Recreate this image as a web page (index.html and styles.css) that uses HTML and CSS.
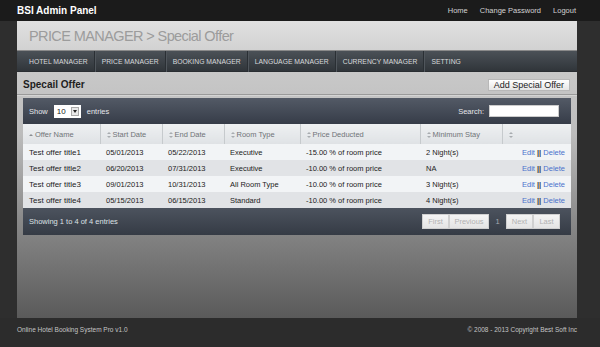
FILE: index.html
```html
<!DOCTYPE html>
<html lang="en">
<head>
<meta charset="utf-8">
<title>BSI Admin Panel</title>
<link rel="stylesheet" href="styles.css">
</head>
<body>
<div class="topbar">
	<span class="brand">BSI Admin Panel</span>
	<ul class="toplinks">
		<li>Home</li>
		<li>Change Password</li>
		<li>Logout</li>
	</ul>
</div>

<div class="page">
	<div class="pagetitle">PRICE MANAGER &gt; Special Offer</div>
	<ul class="nav">
		<li>HOTEL MANAGER</li>
		<li>PRICE MANAGER</li>
		<li>BOOKING MANAGER</li>
		<li>LANGUAGE MANAGER</li>
		<li>CURRENCY MANAGER</li>
		<li class="last">SETTING</li>
	</ul>

	<div class="content">
		<div class="heading">
			<h2>Specail Offer</h2>
			<span class="btn">Add Special Offer</span>
		</div>

		<div class="grid">
			<div class="gridTop">
				<div class="length">Show <span class="select">10<i></i></span> entries</div>
				<div class="search">Search: <span class="field"></span></div>
			</div>

			<table class="list">
				<thead>
					<tr>
						<th class="c1"><span class="sort up"></span>Offer Name</th>
						<th class="c2"><span class="sort"></span>Start Date</th>
						<th class="c3"><span class="sort"></span>End Date</th>
						<th class="c4"><span class="sort"></span>Room Type</th>
						<th class="c5"><span class="sort"></span>Price Deducted</th>
						<th class="c6"><span class="sort"></span>Minimum Stay</th>
						<th class="c7"><span class="sort"></span></th>
					</tr>
				</thead>
				<tbody>
					<tr class="odd">
						<td>Test offer title1</td><td>05/01/2013</td><td>05/22/2013</td><td>Executive</td>
						<td>-15.00 % of room price</td><td>2 Night(s)</td>
						<td class="act"><a>Edit</a> <b>||</b> <a>Delete</a></td>
					</tr>
					<tr class="even">
						<td>Test offer title2</td><td>06/20/2013</td><td>07/31/2013</td><td>Executive</td>
						<td>-10.00 % of room price</td><td>NA</td>
						<td class="act"><a>Edit</a> <b>||</b> <a>Delete</a></td>
					</tr>
					<tr class="odd">
						<td>Test offer title3</td><td>09/01/2013</td><td>10/31/2013</td><td>All Room Type</td>
						<td>-10.00 % of room price</td><td>3 Night(s)</td>
						<td class="act"><a>Edit</a> <b>||</b> <a>Delete</a></td>
					</tr>
					<tr class="even">
						<td>Test offer title4</td><td>05/15/2013</td><td>06/15/2013</td><td>Standard</td>
						<td>-10.00 % of room price</td><td>4 Night(s)</td>
						<td class="act"><a>Edit</a> <b>||</b> <a>Delete</a></td>
					</tr>
				</tbody>
			</table>

			<div class="gridBottom">
				<div class="info">Showing 1 to 4 of 4 entries</div>
				<div class="pager">
					<span class="pbtn w1">First</span><span class="pbtn w2">Previous</span><span class="cur">1</span><span class="pbtn w1">Next</span><span class="pbtn w1">Last</span>
				</div>
			</div>
		</div>
	</div>
</div>

<div class="footer">
	<span>Online Hotel Booking System Pro v1.0</span>
	<span>&copy; 2008 - 2013 Copyright Best Soft Inc</span>
</div>
</body>
</html>
```

FILE: styles.css
```css
*{
	padding:0;
	margin:0;
	list-style: none;
	box-sizing: border-box;
}
html, body {
	height: 100%;
}
body {
	background-color: #2e2e2e;
	font-family: "Liberation Sans", Arial, sans-serif;
	display: flex;
	flex-direction: column;
	overflow: hidden;
}

/* top bar */
.topbar {
	height: 21px;
	background-color: #1b1b1b;
	display: flex;
	align-items: center;
	justify-content: space-between;
	padding: 0 24px 0 17px;
	flex-shrink: 0;
}
.brand {
	color: #fff;
	font-weight: bold;
	font-size: 10px;
}
.toplinks {
	display: flex;
	gap: 12px;
}
.toplinks li {
	color: #d2d2d2;
	font-size: 7.5px;
}

/* main panel */
.page {
	flex: 1;
	margin: 0 23px 0 17px;
	display: flex;
	flex-direction: column;
}
.pagetitle {
	height: 30px;
	line-height: 30px;
	padding-left: 12px;
	font-size: 14.5px;
	letter-spacing: -0.6px;
	color: #9c9c9c;
	background: linear-gradient(#e0e0e0, #d2d2d2);
	border-bottom: 1px solid #8a8a8a;
}
.nav {
	height: 21px;
	display: flex;
	align-items: center;
	padding-left: 5px;
	background: linear-gradient(#4b5157, #30353a);
	border-bottom: 1px solid #2a2e32;
}
.nav li {
	font-size: 6.8px;
	color: #d8dadc;
	padding: 0 6px 0 7px;
	line-height: 21px;
	border-right: 1px solid #2a2f34;
	box-shadow: 1px 0 0 #50565c;
}
.nav li.last {
	border-right: none;
	box-shadow: none;
}

.content {
	flex: 1;
	padding: 0 6px;
	background: linear-gradient(#c8c8c8 0, #bcbcbc 25%, #8a8a8a 60%, #5a5a5a 100%);
}
.heading {
	height: 23px;
	display: flex;
	align-items: center;
	justify-content: space-between;
	border-bottom: 1px solid #9a9a9a;
	box-shadow: 0 1px 0 #d4d4d4;
	margin: 0 -6px;
	padding: 0 6px;
}
.heading h2 {
	font-size: 10px;
	color: #1e1e1e;
	font-weight: bold;
	padding-top: 2px;
}
.btn {
	font-size: 9px;
	color: #222;
	background: linear-gradient(#ffffff, #e6e6e6);
	border: 1px solid #b8b8b8;
	height: 12px;
	line-height: 11px;
	padding: 0 5px;
	margin-right: 1px;
	margin-top: 4px;
}

/* data grid */
.grid {
	margin-top: 3px;
}
.gridTop {
	height: 26px;
	display: flex;
	align-items: center;
	justify-content: space-between;
	padding: 0 12px 0 6px;
	background: linear-gradient(#535a66, #363c48);
	color: #e4e6ea;
	font-size: 7.5px;
}
.length {
	display: flex;
	align-items: center;
}
.select {
	display: inline-flex;
	align-items: center;
	justify-content: space-between;
	width: 27px;
	height: 13px;
	margin: 0 6px 0 6px;
	padding-left: 3px;
	background-color: #fff;
	color: #222;
	font-size: 8px;
}
.select i {
	width: 8px;
	height: 9px;
	margin-right: 2px;
	background-color: #e8e8e8;
	border: 1px solid #aaa;
	position: relative;
}
.select i:after {
	content: "";
	position: absolute;
	left: 1px;
	top: 2px;
	border: 2px solid transparent;
	border-top: 3px solid #222;
}
.search {
	display: flex;
	align-items: center;
}
.field {
	display: inline-block;
	width: 70px;
	height: 12px;
	background-color: #fff;
	margin-left: 5px;
	border: 1px solid #ccc;
}

.list {
	width: 100%;
	border-collapse: collapse;
	font-size: 7.5px;
	color: #222;
}
.list th {
	height: 20px;
	text-align: left;
	font-weight: normal;
	color: #707478;
	padding-left: 6px;
	background: linear-gradient(#eef0f2, #dfe2e5);
	border-right: 1px solid #c6cacd;
}
.list th:last-child {
	border-right: none;
}
.c1 { width: 77px; }
.c2 { width: 62px; }
.c3 { width: 62px; }
.c4 { width: 76px; }
.c5 { width: 120px; }
.c6 { width: 82px; }
.sort {
	display: inline-block;
	width: 4px;
	height: 6px;
	margin-right: 2px;
	vertical-align: -1px;
	position: relative;
}
.sort:before, .sort:after {
	content: "";
	position: absolute;
	left: 0;
	border: 2px solid transparent;
}
.sort:before {
	top: -2px;
	border-bottom: 2px solid #a8acb0;
}
.sort:after {
	top: 4px;
	border-top: 2px solid #a8acb0;
}
.sort.up:after {
	display: none;
}
.sort.up:before {
	top: 0;
	border-bottom-color: #8a8e92;
}
.list td {
	height: 16px;
	padding-left: 6px;
}
.list td:first-child {
	font-size: 8px;
}
.list tr.odd td {
	background-color: #f2f4f6;
}
.list tr.even td {
	background-color: #e1e3e6;
}
.list td.act {
	text-align: right;
	padding-right: 6px;
}
.act a {
	color: #4a72cc;
}
.act b {
	color: #333;
}

.gridBottom {
	height: 27px;
	display: flex;
	align-items: center;
	justify-content: space-between;
	padding: 0 11px 0 6px;
	background: linear-gradient(#4c535e, #353b45);
	color: #dde0e4;
	font-size: 7.5px;
}
.pager {
	display: flex;
	align-items: center;
	font-size: 7.5px;
}
.pbtn {
	height: 15px;
	line-height: 13px;
	text-align: center;
	background: linear-gradient(#f4f4f4, #e4e4e4);
	color: #b2b2b2;
	border: 1px solid #d0d0d0;
}
.w1 { width: 27px; }
.w2 { width: 40px; }
.cur {
	width: 17px;
	text-align: center;
	color: #a8acb2;
}

/* footer */
.footer {
	height: 29px;
	flex-shrink: 0;
	display: flex;
	align-items: flex-start;
	justify-content: space-between;
	padding: 8px 23px 0 17px;
	font-size: 6.5px;
	color: #c4c4c4;
	background-color: #2c2c2c;
}
```
